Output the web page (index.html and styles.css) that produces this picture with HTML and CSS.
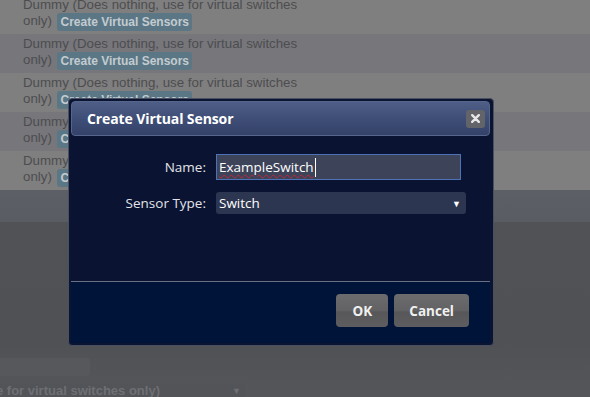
FILE: index.html
```html
<!DOCTYPE html>
<html>
<head>
<meta charset="utf-8">
<link rel="stylesheet" href="styles.css">
</head>
<body>
<div class="page">
  <div class="rows">
    <div class="row">
      <div class="line">Dummy (Does nothing, use for virtual switches</div>
      <div class="line">only) <span class="cvs">Create Virtual Sensors</span></div>
    </div>
    <div class="row alt">
      <div class="line">Dummy (Does nothing, use for virtual switches</div>
      <div class="line">only) <span class="cvs">Create Virtual Sensors</span></div>
    </div>
    <div class="row">
      <div class="line">Dummy (Does nothing, use for virtual switches</div>
      <div class="line">only) <span class="cvs">Create Virtual Sensors</span></div>
    </div>
    <div class="row alt">
      <div class="line">Dummy (Does nothing, use for virtual switches</div>
      <div class="line">only) <span class="cvs">Create Virtual Sensors</span></div>
    </div>
    <div class="row">
      <div class="line">Dummy (Does nothing, use for virtual switches</div>
      <div class="line">only) <span class="cvs">Create Virtual Sensors</span></div>
    </div>
  </div>
  <div class="lower">
    <div class="band"></div>
    <div class="field"></div>
    <div class="sel"><span class="sel-text">e for virtual switches only)</span><span class="sel-arrow">▼</span></div>
  </div>
</div>

<div class="dialog">
  <div class="titlebar">
    <span class="title">Create Virtual Sensor</span>
    <span class="close">
      <svg width="9" height="9" viewBox="0 0 9 9"><path d="M1.2 1.2 L7.8 7.8 M7.8 1.2 L1.2 7.8" stroke="#e6e6e6" stroke-width="2.4" stroke-linecap="round"/></svg>
    </span>
  </div>
  <div class="content">
    <div class="form">
      <label class="lbl">Name:</label>
      <div class="input"><span class="spell">ExampleSwitch</span><span class="caret"></span></div>
      <label class="lbl">Sensor Type:</label>
      <div class="select"><span>Switch</span><span class="arrow">▼</span></div>
    </div>
  </div>
  <div class="buttonpane">
    <span class="btn ok">OK</span>
    <span class="btn">Cancel</span>
  </div>
</div>
</body>
</html>
```

FILE: styles.css
```css
html, body {
  margin: 0;
  padding: 0;
}
body {
  width: 590px;
  height: 397px;
  overflow: hidden;
  background: #505256;
  font-family: "Liberation Sans", Arial, sans-serif;
  position: relative;
}
.page {
  display: flex;
  flex-direction: column;
  height: 397px;
}
.rows {
  margin-top: -5px;
}
.row {
  height: 39px;
  box-sizing: border-box;
  padding: 2px 0 0 23px;
  background: #7f7f7f;
  color: #4d4d4f;
  font-size: 13.3px;
}
.row.alt {
  background: #76767b;
}
.line {
  height: 16px;
  line-height: 16px;
  white-space: nowrap;
}
.cvs {
  display: inline-block;
  background: #5b7785;
  color: #c3cbd0;
  font-weight: bold;
  font-size: 12px;
  line-height: 18px;
  padding: 0 3px 0 4px;
  border-radius: 3px;
  margin-left: 1px;
  vertical-align: top;
}
.lower {
  flex: 1;
  display: flex;
  flex-direction: column;
  background: linear-gradient(#505256 0%, #4f5155 70%, #55575a 100%);
}
.band {
  height: 32px;
  background: linear-gradient(#5c5f66, #595c62);
}
.field {
  margin-top: 136px;
  width: 90px;
  height: 18px;
  background: #57585b;
  border-radius: 0 3px 3px 0;
}
.sel {
  margin-top: 7px;
  width: 245px;
  height: 22px;
  background: #535458;
  border-radius: 0 3px 0 0;
  display: flex;
  justify-content: space-between;
  align-items: center;
  color: #6d6f73;
  font-weight: bold;
  font-size: 13px;
  white-space: nowrap;
  box-sizing: border-box;
  padding-right: 4px;
  padding-bottom: 7px;
}
.sel-text {
  margin-left: -4px;
}
.sel-arrow {
  font-size: 9px;
  color: #6d6f73;
}

/* dialog */
.dialog {
  position: absolute;
  left: 68px;
  top: 98px;
  width: 426px;
  height: 248px;
  box-sizing: border-box;
  padding: 2px 3px 2px 2px;
  background: #0b1430;
  border: 1px solid #4a5064;
  border-radius: 4px;
  display: flex;
  flex-direction: column;
  font-family: "Open Sans", "Noto Sans", sans-serif;
}
.titlebar {
  height: 35px;
  box-sizing: border-box;
  border-radius: 4px;
  background: linear-gradient(#4e5e86, #3f4e76 50%, #34426a);
  border: 1px solid #56658b;
  display: flex;
  align-items: center;
  justify-content: space-between;
  padding: 0 4px 0 15px;
}
.title {
  color: #ffffff;
  font-weight: bold;
  font-size: 14px;
  letter-spacing: -0.1px;
}
.close {
  width: 19px;
  height: 18px;
  background: #626469;
  border-radius: 3px;
  display: flex;
  align-items: center;
  justify-content: center;
}
.content {
  height: 145px;
  box-sizing: border-box;
  padding-top: 18px;
  background: #0a1331;
}
.form {
  display: grid;
  grid-template-columns: 135px auto;
  column-gap: 10px;
  row-gap: 12px;
  align-items: center;
  justify-items: start;
}
.lbl {
  justify-self: end;
  color: #e2e4ea;
  font-size: 13.5px;
}
.input {
  width: 245px;
  height: 26px;
  box-sizing: border-box;
  background: #3d4459;
  border: 1px solid #4d72b6;
  color: #ffffff;
  font-size: 13.5px;
  display: flex;
  align-items: center;
  padding-left: 2px;
}
.spell {
  text-decoration: underline wavy #b8283c;
  text-decoration-thickness: 1px;
  text-underline-offset: 2px;
}
.caret {
  display: inline-block;
  width: 1px;
  height: 19px;
  background: #ffffff;
  margin-left: 1px;
}
.select {
  width: 250px;
  height: 22px;
  box-sizing: border-box;
  background: #2d3650;
  border-radius: 3px;
  color: #ffffff;
  font-size: 13.5px;
  display: flex;
  align-items: center;
  justify-content: space-between;
  padding: 0 5px 0 3px;
}
.arrow {
  font-size: 9px;
}
.buttonpane {
  flex: 1;
  background: #001338;
  border-top: 1px solid #6a7081;
  display: flex;
  justify-content: flex-end;
  align-items: flex-start;
  gap: 6px;
  padding: 12px 21px 0 0;
  border-radius: 0 0 3px 3px;
}
.btn {
  height: 33px;
  box-sizing: border-box;
  border-radius: 4px;
  background: linear-gradient(#6c6c6e, #626264 50%, #575759 55%, #5e5e60);
  color: #f0f0f0;
  font-weight: bold;
  font-size: 13.5px;
  display: flex;
  align-items: center;
  justify-content: center;
  padding: 0 15px;
}
.btn.ok {
  width: 52px;
  padding: 0;
}
```
